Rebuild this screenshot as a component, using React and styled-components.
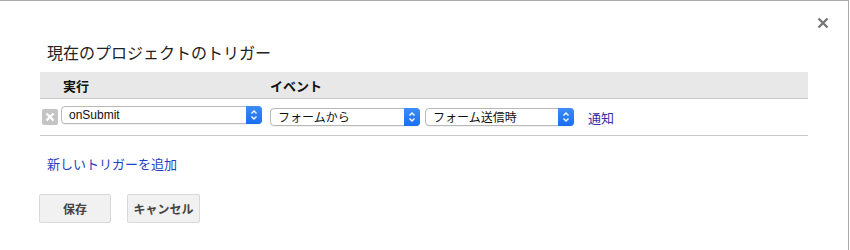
import React from "react";
import styled, { createGlobalStyle } from "styled-components";

const GlobalStyle = createGlobalStyle`
  body {
    margin: 0;
    background: #fff;
    font-family: "Noto Sans CJK JP", "Liberation Sans", sans-serif;
  }
`;

const Dialog = styled.div`
  position: relative;
  box-sizing: border-box;
  width: 849px;
  height: 250px;
  border-top: 1px solid #a9a9a9;
  border-right: 1px solid #a9a9a9;
  padding: 41px 40px 0 40px;
  overflow: hidden;
`;

const CloseButton = styled.button`
  position: absolute;
  top: 16px;
  right: 19px;
  width: 12px;
  height: 12px;
  padding: 0;
  border: none;
  background: none;
  cursor: pointer;
  svg {
    display: block;
  }
`;

const Title = styled.h2`
  margin: 0 0 9px 7px;
  font-size: 16px;
  line-height: 21px;
  font-weight: normal;
  color: #222;
`;

const Table = styled.div`
  width: 768px;
`;

const HeaderRow = styled.div`
  display: flex;
  align-items: center;
  height: 26px;
  background: #e8e8e8;
  border-bottom: 1px solid #c9c9c9;
  font-size: 13px;
  font-weight: bold;
  color: #111;
`;

const HeaderCell = styled.div`
  width: ${(p) => p.$width}px;
  padding-left: ${(p) => p.$pad}px;
  box-sizing: border-box;
`;

const Row = styled.div`
  display: flex;
  align-items: center;
  height: 36px;
  border-bottom: 1px solid #c9c9c9;
`;

const RemoveIcon = styled.span`
  display: inline-flex;
  align-items: center;
  justify-content: center;
  width: 16px;
  height: 16px;
  margin: -1px 3px 0 2px;
  background: #c4c4c4;
  border-radius: 2px;
`;

const SelectBox = styled.div`
  position: relative;
  box-sizing: border-box;
  width: ${(p) => p.$width}px;
  height: 18px;
  margin-right: ${(p) => p.$gap || 0}px;
  margin-top: ${(p) => p.$top || 0}px;
  border: 1px solid #b8b8b8;
  border-radius: 4px;
  background: #fff;
  font-size: 12px;
  line-height: 16px;
  padding-left: 7px;
  color: #111;
  box-shadow: 0 1px 0 rgba(0, 0, 0, 0.05);
  font-family: ${(p) =>
    p.$latin
      ? '"Liberation Sans", sans-serif'
      : '"Noto Sans CJK JP", sans-serif'};
`;

const Arrow = styled.span`
  position: absolute;
  top: -1px;
  right: -1px;
  width: 16px;
  height: 18px;
  border-radius: 0 4px 4px 0;
  background: linear-gradient(#3d8cf9, #1a6ef0);
  display: flex;
  align-items: center;
  justify-content: center;
`;

const Link = styled.a`
  color: ${(p) => p.$color || "#1f3fc4"};
  font-size: 13px;
  text-decoration: none;
  cursor: pointer;
`;

const AddLine = styled.div`
  margin: 16px 0 0 7px;
  height: 20px;
  line-height: 20px;
`;

const Buttons = styled.div`
  display: flex;
  gap: 16px;
  margin: 22px 0 0 -1px;
`;

const Button = styled.button`
  width: ${(p) => p.$width}px;
  height: 29px;
  padding: 0;
  white-space: nowrap;
  background: #f1f1f1;
  border: 1px solid #d9d9d9;
  border-radius: 2px;
  font-family: "Noto Sans CJK JP", sans-serif;
  font-size: 12px;
  font-weight: bold;
  color: #444;
  cursor: pointer;
`;

const Chevrons = () => (
  <svg width="8" height="12" viewBox="0 0 8 12">
    <path
      d="M1.5 4.5 L4 2 L6.5 4.5 M1.5 7.5 L4 10 L6.5 7.5"
      fill="none"
      stroke="#fff"
      strokeWidth="1.4"
    />
  </svg>
);

const Select = ({ children, ...rest }) => (
  <SelectBox {...rest}>
    {children}
    <Arrow>
      <Chevrons />
    </Arrow>
  </SelectBox>
);

const App = () => {
  return (
    <>
      <GlobalStyle />
      <Dialog>
        <CloseButton aria-label="閉じる">
          <svg width="12" height="12" viewBox="0 0 12 12">
            <path
              d="M1.5 1.5 L10.5 10.5 M10.5 1.5 L1.5 10.5"
              stroke="#777"
              strokeWidth="2.4"
            />
          </svg>
        </CloseButton>
        <Title>現在のプロジェクトのトリガー</Title>
        <Table>
          <HeaderRow>
            <HeaderCell $width={230} $pad={23}>
              実行
            </HeaderCell>
            <HeaderCell $width={300} $pad={0}>
              イベント
            </HeaderCell>
          </HeaderRow>
          <Row>
            <RemoveIcon>
              <svg width="10" height="10" viewBox="0 0 10 10">
                <path
                  d="M1.5 1.5 L8.5 8.5 M8.5 1.5 L1.5 8.5"
                  stroke="#fff"
                  strokeWidth="2.2"
                />
              </svg>
            </RemoveIcon>
            <Select $width={201} $gap={8} $latin $top={-4}>
              onSubmit
            </Select>
            <Select $width={150} $gap={5}>
              フォームから
            </Select>
            <Select $width={149} $gap={14}>
              フォーム送信時
            </Select>
            <Link $color="#3a2fa8">通知</Link>
          </Row>
        </Table>
        <AddLine>
          <Link>新しいトリガーを追加</Link>
        </AddLine>
        <Buttons>
          <Button $width={72}>保存</Button>
          <Button $width={73}>キャンセル</Button>
        </Buttons>
      </Dialog>
    </>
  );
};

export default App;
